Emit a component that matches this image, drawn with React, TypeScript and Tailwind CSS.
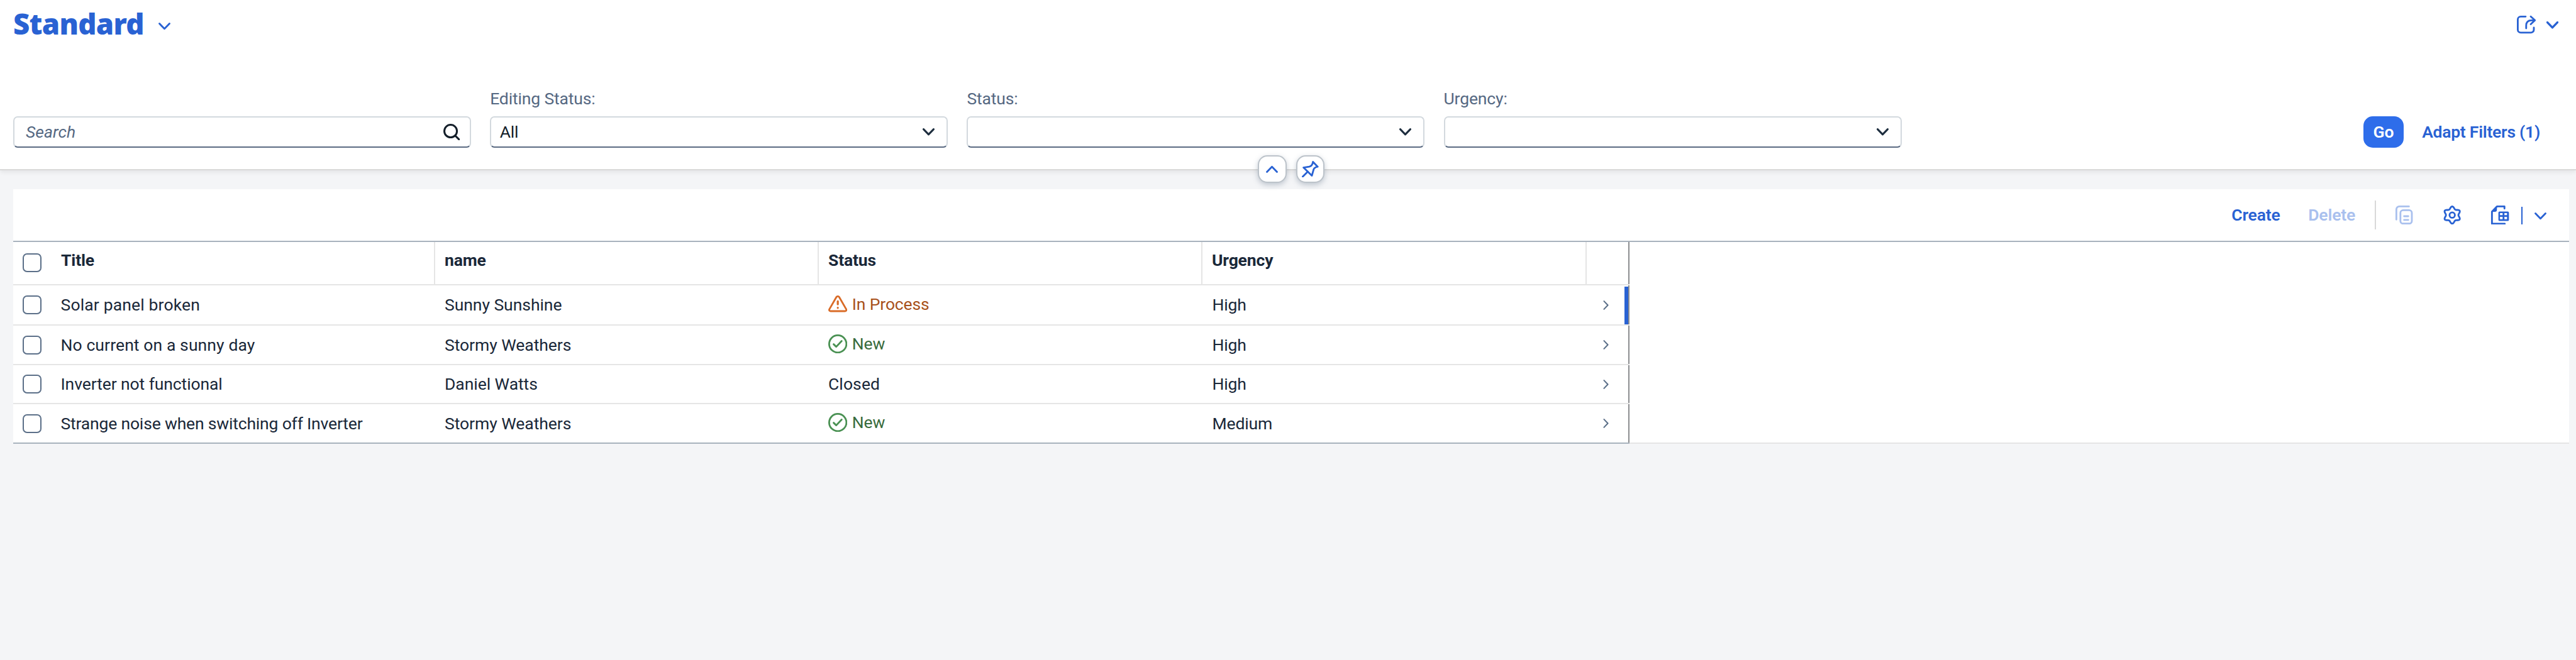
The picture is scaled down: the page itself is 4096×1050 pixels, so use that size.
import type { ReactNode } from "react";

function Chevron({ className = "", flip = false, width = 3 }: { className?: string; flip?: boolean; width?: number }) {
  return (
    <svg viewBox="0 0 20 12.5" className={`w-[19px] h-[12px] shrink-0 ${className}`} fill="none" stroke="currentColor" strokeWidth={width} strokeLinecap="round" strokeLinejoin="round">
      <path d={flip ? "M1.6 10.9 10 2.2l8.4 8.7" : "M1.6 1.6 10 10.3l8.4-8.7"} />
    </svg>
  );
}

function Icon({ children, className = "" }: { children: ReactNode; className?: string }) {
  return (
    <svg viewBox="0 0 32 32" className={`w-[30.3px] h-[30.3px] shrink-0 ${className}`} fill="none" stroke="currentColor" strokeWidth={3} strokeLinecap="round" strokeLinejoin="round">
      {children}
    </svg>
  );
}

// Six-lobed outline sampled around the centre of the 32-unit box.
const gearPath =
  Array.from({ length: 120 }, (_, i) => {
    const a = (i / 120) * Math.PI * 2;
    const r = 12.3 + 2 * Math.cos(6 * a) + 0.15 * Math.cos(12 * a);
    return `${i ? "L" : "M"}${(16 + r * Math.sin(a)).toFixed(2)} ${(16 - r * Math.cos(a)).toFixed(2)}`;
  }).join("") + "Z";

function ShareIcon() {
  return (
    <Icon>
      <path d="M14.7 2.5H6.5a5 5 0 0 0-5 5v17a5 5 0 0 0 5 5h17a5 5 0 0 0 5-5V21" />
      <path d="M15.6 22.3v-4.5c0-5.500 3-9 9-9h5.500M23.300 2.300l7 6.500-7 6.500" />
    </Icon>
  );
}

function CopyIcon() {
  return (
    <Icon className="text-[#a9c0ee]">
      <path d="M23.600 1.500H7.500a5 5 0 0 0-5 5v17" />
      <rect x="9.300" y="7.800" width="19.200" height="22.500" rx="4.500" />
      <path d="M15.500 18h7M15.500 24.200h7" />
    </Icon>
  );
}

function GearIcon() {
  return (
    <Icon>
      <path d={gearPath} />
      <circle cx="16" cy="16" r="4.500" />
    </Icon>
  );
}

function ExportIcon() {
  return (
    <Icon>
      <path d="M23.500 5V1.500H10.800L2.500 10.300V30.500h21.500" />
      <path d="M2 10.500 10.800 1.500v5.500a3.500 3.500 0 0 1-3.500 3.500z" fill="currentColor" stroke="none" />
      <path
        fillRule="evenodd"
        fill="currentColor"
        stroke="none"
        d="M15.300 10H29a2 2 0 0 1 2 2v12a2 2 0 0 1-2 2H15.300a2 2 0 0 1-2-2V12a2 2 0 0 1 2-2zM16 12.600v3.600h4.400v-3.600zM23.400 12.600v3.600h4.400v-3.600zM16 19v4h4.400v-4zM23.400 19v4h4.400v-4z"
      />
    </Icon>
  );
}

function Checkbox() {
  return <span className="block w-[30px] h-[30px] rounded-[7px] border-2 border-[#5b6f88] bg-white" />;
}

function Field({ children }: { children?: ReactNode }) {
  return (
    <div className="relative flex h-[49.300px] w-full items-center overflow-hidden rounded-[7px] border-2 border-[#d3d9de] border-b-[#5a6a82] bg-white">
      {children}
    </div>
  );
}

function Select({ label, value }: { label: string; value?: string }) {
  return (
    <div className="flex w-[728px] flex-col gap-[13.700px]">
      <div className="h-[30px] leading-[30px] text-[#556882]">{label}</div>
      <Field>
        <span className="flex-1 pl-[13.500px] text-[#131e29]">{value}</span>
        <Chevron className="mr-[19px] text-[#1d2d3e]" width={3.2} />
      </Field>
    </div>
  );
}

function ToggleButton({ children }: { children: ReactNode }) {
  return (
    <button className="flex h-[44.500px] w-[45.500px] items-center justify-center rounded-[15px] border-2 border-[#bcc3ca] bg-white shadow-[0_3px_8px_rgba(85,107,130,0.35)]">
      {children}
    </button>
  );
}

function Status({ value }: { value: string }) {
  if (value === "In Process")
    return (
      <span className="mb-[3px] flex items-center text-[#a8521c]">
        <Icon className="mr-[7.500px] text-[#d96b27]">
          <path d="M13.700 4.800a2.700 2.700 0 0 1 4.600 0l11.800 20.400c1 2-.3 3.300-2.200 3.300H4.100c-1.900 0-3.200-1.300-2.200-3.300z" />
          <path d="M16 12v5M16 22.800v.2" strokeWidth={3.4} />
        </Icon>
        {value}
      </span>
    );
  if (value === "New")
    return (
      <span className="mb-[3px] flex items-center text-[#386b3c]">
        <Icon className="mr-[7.500px] text-[#4a9153]">
          <circle cx="16" cy="16" r="14.500" />
          <path d="M9 16.500 13.400 20.700 22.500 11" />
        </Icon>
        {value}
      </span>
    );
  return <span className="tracking-[0.100px]">{value}</span>;
}

const rows = [
  { title: "Solar panel broken", name: "Sunny Sunshine", status: "In Process", urgency: "High", active: true, spacing: "tracking-[0.150px]", height: "h-[64.500px]" },
  { title: "No current on a sunny day", name: "Stormy Weathers", status: "New", urgency: "High", spacing: "tracking-[0.100px]", height: "h-[62.500px]" },
  { title: "Inverter not functional", name: "Daniel Watts", status: "Closed", urgency: "High", spacing: "tracking-[-0.100px]", height: "h-[62.500px]" },
  { title: "Strange noise when switching off Inverter", name: "Stormy Weathers", status: "New", urgency: "Medium", spacing: "tracking-[-0.180px]", height: "h-[62.500px]" },
];

const grid = "grid w-[2570px] grid-cols-[61px_610px_610px_610px_611px_68px]";

export default function App() {
  return (
    <div className="h-[1050px] w-[4096px] overflow-hidden bg-[#f4f5f7] font-['Roboto',sans-serif] text-[26.500px] leading-[32px] tracking-[-0.15px] whitespace-nowrap text-[#1a2839]">
      <header className="relative h-[271px] border-b-2 border-[#d9d9d9] bg-white pl-[21px] shadow-[0_3px_7px_rgba(0,0,0,0.07)]">
        <div className="flex h-[74px] items-center pr-[28px] text-[#2962d3]">
          <h1 className="w-[209px] font-['Noto_Sans',sans-serif] text-[45.500px] leading-[60px] font-black tracking-[-0.700px]">Standard</h1>
          <Chevron className="mt-[9px] ml-[22px]" />
          <div className="mt-[4px] ml-auto flex items-center gap-[17px]">
            <ShareIcon />
            <Chevron className="mt-[2px]" width={3.6} />
          </div>
        </div>
        <div className="mt-[67.600px] flex items-end gap-[30.200px] pr-[57px]">
          <div className="w-[728px]">
            <Field>
              <span className="flex-1 pl-[18px] tracking-[0.050px] text-[#556882] italic">Search</span>
              <svg viewBox="0 0 28 28" className="mr-[16px] h-[26.500px] w-[26.500px] text-[#131e29]" fill="none" stroke="currentColor" strokeWidth={3.2} strokeLinecap="round">
                <circle cx="12.200" cy="12.200" r="10.600" />
                <path d="M19.800 19.800l6.600 6.600" />
              </svg>
            </Field>
          </div>
          <Select label="Editing Status:" value="All" />
          <Select label="Status:" />
          <Select label="Urgency:" />
          <div className="ml-auto flex items-center gap-[29px] font-semibold">
            <button className="h-[49.300px] w-[64.500px] rounded-[15px] bg-[#2e6dea] text-white">Go</button>
            <button className="tracking-[-0.250px] text-[#2962d3]">Adapt Filters (1)</button>
          </div>
        </div>
        <div className="absolute top-[246.500px] left-[2000px] flex gap-[15px] text-[#2962d3]">
          <ToggleButton>
            <Chevron flip />
          </ToggleButton>
          <ToggleButton>
            <svg viewBox="0 0 28 28" className="h-[26.500px] w-[26.500px] shrink-0" fill="none" stroke="currentColor" strokeWidth={3} strokeLinecap="round" strokeLinejoin="round">
              <path d="M1.500 26.500 10 18" />
              <path d="M18.700 1.600 26.600 9.700C23 10.500 20.500 11.500 19.800 14.500L16.900 24.800 2.800 11.200 12.500 9.700C15.500 9 18 6 18.700 1.600z" />
            </svg>
          </ToggleButton>
        </div>
      </header>

      <main className="pt-[30.400px] pr-[11px] pl-[21px]">
        <section className="h-[405px] border-b-2 border-[#e5e5e5] bg-white">
          <div className="flex h-[83.500px] items-center justify-end border-b-2 border-[#a8b2bd] pr-[36.500px] font-semibold text-[#2962d3]">
            <button>Create</button>
            <button className="ml-[44.500px] text-[#a9c0ee]">Delete</button>
            <span className="ml-[31px] h-[45.500px] w-[2px] bg-[#d9d9d9]" />
            <span className="ml-[30px]"><CopyIcon /></span>
            <span className="ml-[46px]"><GearIcon /></span>
            <span className="ml-[45.500px]"><ExportIcon /></span>
            <span className="mt-[2px] ml-[18px] h-[27.500px] w-[2px] bg-[#2962d3]" />
            <Chevron className="mt-[4px] ml-[19px]" />
          </div>

          <div className={`${grid} h-[69px] border-b-2 border-[#e5e5e5] font-bold`}>
            <div className="flex items-center pl-[15px]"><Checkbox /></div>
            {["Title", "name", "Status", "Urgency"].map((heading) => (
              <div key={heading} className="flex items-center border-r-2 border-[#e5e5e5] pb-[8px] pl-[15px]">{heading}</div>
            ))}
            <div className="border-r-2 border-[#8c8d90]" />
          </div>

          {rows.map((row) => (
            <div key={row.title} className={`${grid} ${row.height} border-b-2 border-[#e5e5e5] last:border-[#a8b2bd]`}>
              <div className="flex items-center pl-[15px]"><Checkbox /></div>
              <div className={`flex items-center pl-[14.500px] ${row.spacing}`}>{row.title}</div>
              <div className="flex items-center pl-[15px] tracking-[-0.050px]">{row.name}</div>
              <div className="flex items-center pl-[15px]"><Status value={row.status} /></div>
              <div className="flex items-center pl-[15.500px]">{row.urgency}</div>
              <div className="relative flex items-center border-r-2 border-[#8c8d90] pl-[25.500px]">
                <svg viewBox="0 0 10 16" className="h-[15px] w-[9.500px] text-[#5b6f88]" fill="none" stroke="currentColor" strokeWidth={2.2} strokeLinecap="round" strokeLinejoin="round">
                  <path d="M1.500 1.200 8 8l-6.500 6.800" />
                </svg>
                {row.active && <span className="absolute top-[2px] right-0 bottom-0 w-[6px] bg-[#2962d3]" />}
              </div>
            </div>
          ))}
        </section>
      </main>
    </div>
  );
}
